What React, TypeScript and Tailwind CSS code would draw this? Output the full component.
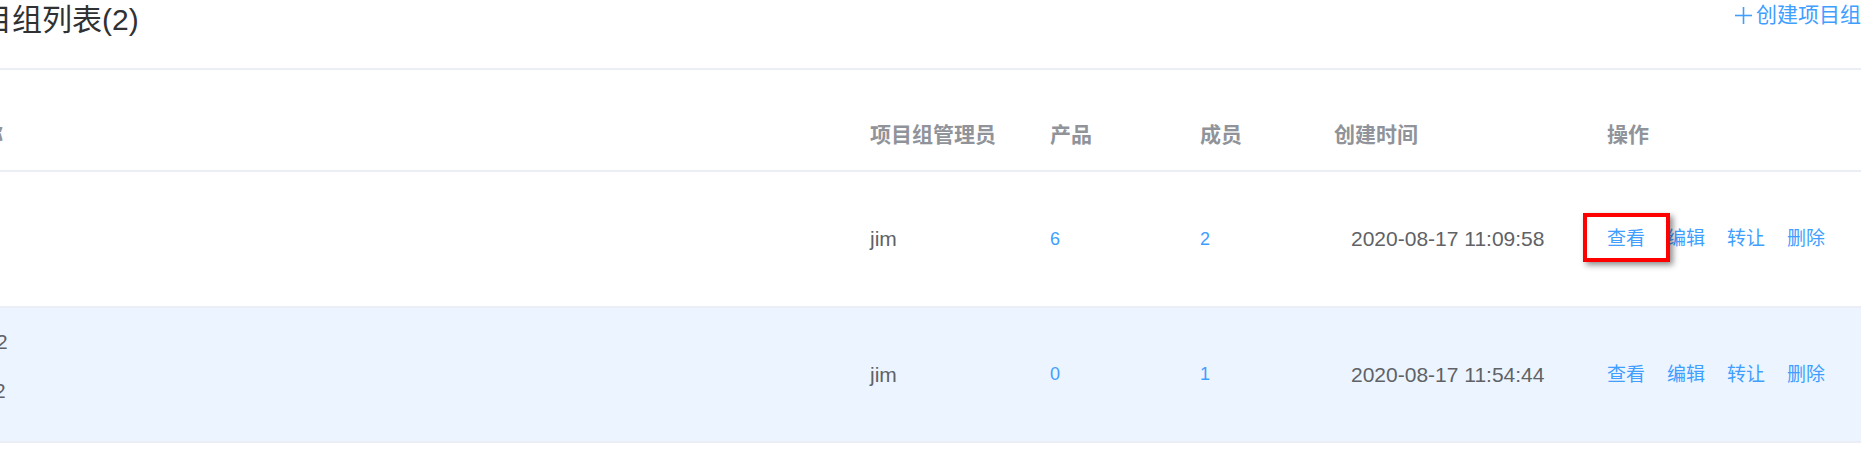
import React from "react";

const cols = "grid grid-cols-[980px_180px_150px_134px_273px_254px]";

function Actions({ boxed }: { boxed?: boolean }) {
  return (
    <div className="flex items-center gap-[22px] text-[19px] leading-[24px] text-[#409eff]">
      <span className="relative">
        查看
        {boxed && (
          <div className="absolute left-[-24px] top-[-14px] w-[87px] h-[49px] border-[4px] border-[#ff0000] shadow-[3px_3px_6px_rgba(0,0,0,0.45)]" />
        )}
      </span>
      <span>编辑</span>
      <span>转让</span>
      <span>删除</span>
    </div>
  );
}

export default function App() {
  return (
    <div className="w-[1861px] h-[452px] overflow-hidden bg-white font-['Liberation_Sans','Noto_Sans_CJK_SC',sans-serif]">
      <div className="h-[70px] border-b-2 border-[#ebeef5] flex justify-between items-start">
        <div className="-ml-[48px] text-[30px] leading-[40px] text-[#303133] whitespace-nowrap">
          项目组列表(2)
        </div>
        <div className="flex items-center gap-[4px] h-[30px] text-[21px] leading-[30px] text-[#409eff] whitespace-nowrap">
          <svg width="17" height="17" viewBox="0 0 17 17" fill="none" stroke="#409eff" strokeWidth="1.6">
            <line x1="8.5" y1="0" x2="8.5" y2="17" />
            <line x1="0" y1="8.5" x2="17" y2="8.5" />
          </svg>
          <span>创建项目组</span>
        </div>
      </div>

      <div className="-ml-[110px] w-[1971px]">
        <div className={`${cols} h-[102px] pt-[30px] border-b-2 border-[#ebeef5] text-[21px] font-bold text-[#909399] items-center whitespace-nowrap`}>
          <div className="pl-[8px]">项目组名称</div>
          <div>项目组管理员</div>
          <div>产品</div>
          <div>成员</div>
          <div>创建时间</div>
          <div>操作</div>
        </div>

        <div className={`${cols} h-[136px] border-b-2 border-[#ebeef5] items-center whitespace-nowrap`}>
          <div className="self-start pt-[19px] flex flex-col gap-[19px] text-[21px] leading-[30px] text-[#606266]">
            <span>测试项目组</span>
            <span>测试项目组</span>
          </div>
          <div className="text-[21px] text-[#606266]">jim</div>
          <div className="text-[18px] text-[#409eff]">6</div>
          <div className="text-[18px] text-[#409eff]">2</div>
          <div className="pl-[17px] text-[21px] text-[#606266]">2020-08-17 11:09:58</div>
          <Actions boxed />
        </div>

        <div className={`${cols} h-[135px] border-b-2 border-[#ebeef5] bg-[#ecf5ff] items-center whitespace-nowrap`}>
          <div className="self-start pt-[19px] flex flex-col gap-[19px] text-[21px] leading-[30px] text-[#606266]">
            <span className="ml-[1px]">测试项目组2</span>
            <span className="-ml-[1px]">测试项目组2</span>
          </div>
          <div className="text-[21px] text-[#606266]">jim</div>
          <div className="text-[18px] text-[#409eff]">0</div>
          <div className="text-[18px] text-[#409eff]">1</div>
          <div className="pl-[17px] text-[21px] text-[#606266]">2020-08-17 11:54:44</div>
          <Actions />
        </div>
      </div>
    </div>
  );
}
